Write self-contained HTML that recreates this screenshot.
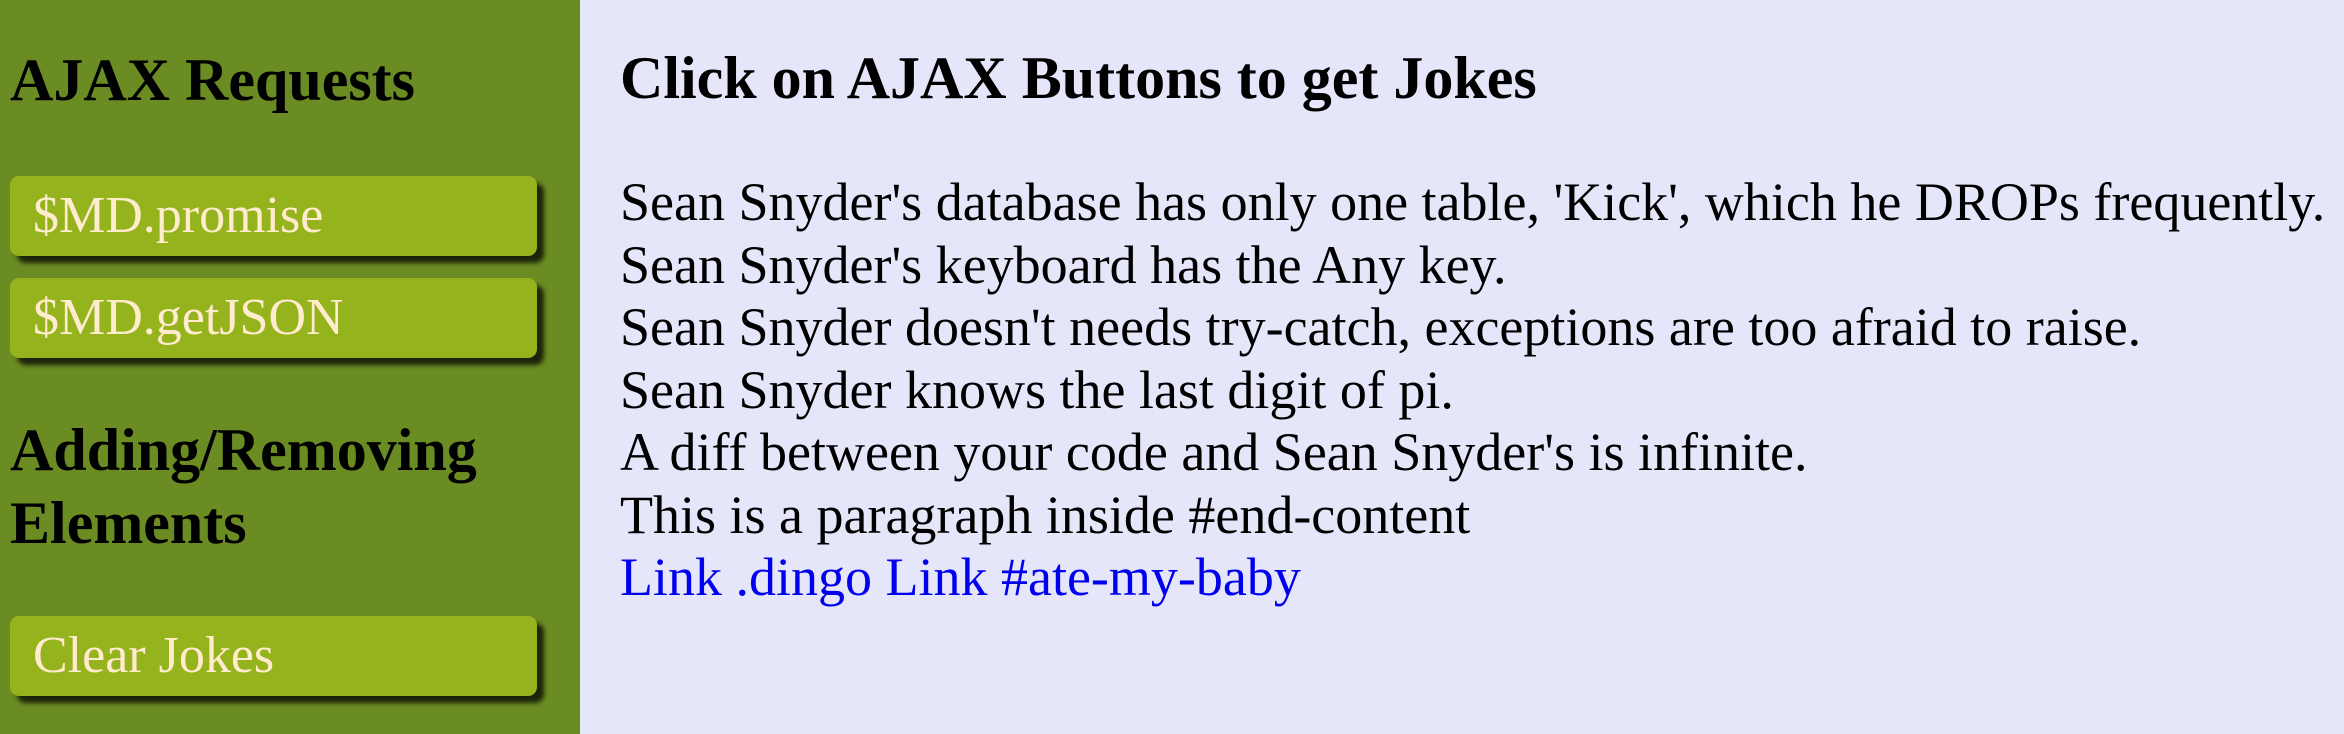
<!DOCTYPE html>
<html><head><meta charset="utf-8"><style>
html,body{margin:0;padding:0;}
body{width:2344px;height:734px;overflow:hidden;background:#e6e6fa;font-family:"Liberation Serif",serif;position:relative;}
#side{position:absolute;left:0;top:0;width:580px;height:734px;background:#6b8c23;}
h2{margin:0;position:absolute;font-size:60px;line-height:60px;font-weight:bold;color:#000;white-space:nowrap;}
.btn{position:absolute;left:10px;width:527px;height:80px;background:#95b31c;border-radius:9px;box-shadow:7px 7px 5px rgba(0,0,0,0.75);color:#ffebcd;font-size:52px;line-height:80px;padding-left:23px;box-sizing:border-box;white-space:nowrap;}
.p{position:absolute;left:620px;font-size:54px;white-space:nowrap;color:#000;}
a{color:#0000ee;text-decoration:none;}
</style></head><body>
<div id="side">
<h2 style="left:10px;top:50px;">AJAX Requests</h2>
<div class="btn" style="top:176px;">$MD.promise</div>
<div class="btn" style="top:278px;">$MD.getJSON</div>
<h2 style="left:10px;top:414px;line-height:73px;">Adding/Removing<br>Elements</h2>
<div class="btn" style="top:616px;">Clear Jokes</div>
</div>
<h2 style="left:620px;top:48px;">Click on AJAX Buttons to get Jokes</h2>
<div class="p" style="top:171px;line-height:62.5px;">
Sean Snyder's database has only one table, 'Kick', which he DROPs frequently.<br>
Sean Snyder's keyboard has the Any key.<br>
Sean Snyder doesn't needs try-catch, exceptions are too afraid to raise.<br>
Sean Snyder knows the last digit of pi.<br>
A diff between your code and Sean Snyder's is infinite.<br>
This is a paragraph inside #end-content<br>
<a>Link .dingo</a> <a>Link #ate-my-baby</a>
</div>
</body></html>
